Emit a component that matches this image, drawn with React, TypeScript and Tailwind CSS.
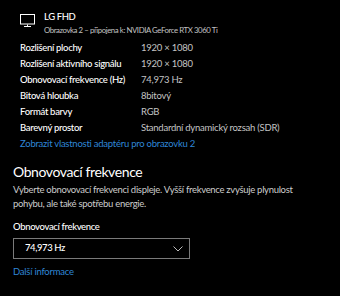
import React from "react";

const rows: [string, string][] = [
  ["Rozlišení plochy", "1920 × 1080"],
  ["Rozlišení aktivního signálu", "1920 × 1080"],
  ["Obnovovací frekvence (Hz)", "74,973 Hz"],
  ["Bitová hloubka", "8bitový"],
  ["Formát barvy", "RGB"],
  ["Barevný prostor", "Standardní dynamický rozsah (SDR)"],
];

export default function App() {
  return (
    <div
      className="w-[340px] h-[296px] bg-black text-white overflow-hidden"
      style={{ fontFamily: 'Lato, "Noto Sans", sans-serif' }}
    >
      <div className="flex pt-[10px] pl-[20px] h-[36px]">
        <svg width="16" height="14" viewBox="0 0 16 14" className="mt-[4px] shrink-0" fill="none" stroke="#fff" strokeWidth="1">
          <rect x="0.5" y="0.5" width="14" height="9.5" />
          <path d="M7.5 10.5v2M4 12.5h7" />
        </svg>
        <div className="ml-[8px]">
          <div className="text-[9.5px] leading-[14px] tracking-[-0.4px] font-medium">LG FHD</div>
          <div className="text-[7.8px] leading-[12px] tracking-[-0.42px] text-[#c2c2c2] whitespace-nowrap">
            Obrazovka 2 – připojena k: NVIDIA GeForce RTX 3060 Ti
          </div>
        </div>
      </div>
      <div className="pl-[20px] mt-[4px] tracking-[-0.25px]">
        {rows.map(([k, v]) => (
          <div key={k} className="flex h-[16px] items-center text-[9.5px] whitespace-nowrap">
            <div className="w-[121px] shrink-0 text-white font-medium tracking-[-0.3px]">{k}</div>
            <div className="text-[#c4c4c4]">{v}</div>
          </div>
        ))}
        <div className="h-[16px] flex items-center text-[9.5px] text-[#2f86d6] whitespace-nowrap">
          Zobrazit vlastnosti adaptéru pro obrazovku 2
        </div>
      </div>
      <div className="pl-[13px]">
        <div className="text-[14px] leading-[20px] mt-[10px] tracking-[-0.4px] whitespace-nowrap">Obnovovací frekvence</div>
        <div className="text-[9.5px] leading-[14px] tracking-[-0.3px] text-[#cccccc] mt-[1px] whitespace-nowrap">
          Vyberte obnovovací frekvenci displeje. Vyšší frekvence zvyšuje plynulost
          <br />
          pohybu, ale také spotřebu energie.
        </div>
        <div className="text-[9.5px] leading-[14px] tracking-[-0.35px] font-medium mt-[9px] whitespace-nowrap">Obnovovací frekvence</div>
        <div className="mt-[4px] w-[177px] h-[21px] border border-[#7a7a7a] flex items-center justify-between pl-[11px] pr-[6px]">
          <span className="text-[9.5px] tracking-[-0.4px] font-medium">74,973 Hz</span>
          <svg width="10" height="6" viewBox="0 0 10 6" fill="none" stroke="#bbb" strokeWidth="1">
            <path d="M0.5 0.5l4.5 4.5 4.5-4.5" />
          </svg>
        </div>
        <div className="text-[9.5px] leading-[14px] tracking-[-0.25px] text-[#2f86d6] mt-[6px] whitespace-nowrap">Další informace</div>
      </div>
    </div>
  );
}
